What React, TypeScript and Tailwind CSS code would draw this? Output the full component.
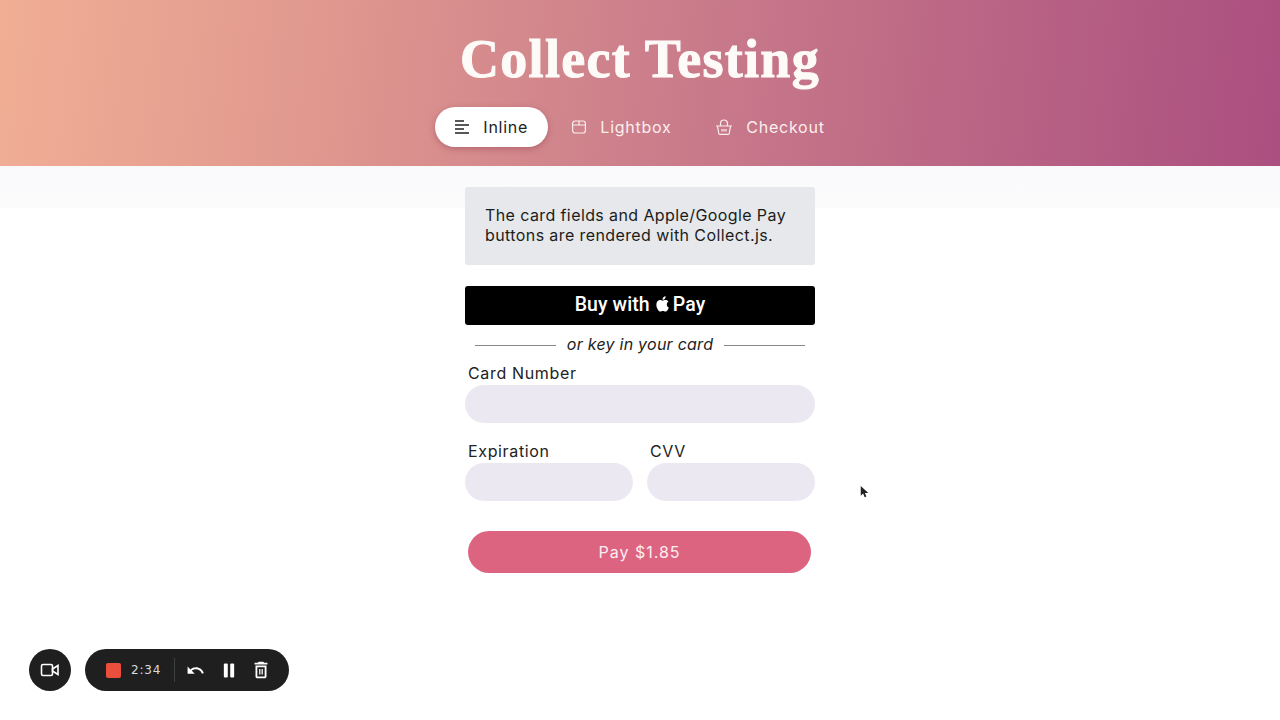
import React from 'react';

const sans = "font-['Inter','Open_Sans',sans-serif]";

const Field = ({ label, className }: { label: string; className?: string }) => (
  <div className={className}>
    <div className="pl-[3px] h-[24px] text-[16px] leading-[24px] tracking-[0.65px] text-[#222]">{label}</div>
    <div className="h-[38px] rounded-[19px] bg-[#ece8f2]" />
  </div>
);

const App = () => (
  <div className={`relative w-[1280px] h-[720px] overflow-hidden bg-white ${sans}`}>
    <header className="h-[166px] pt-[31px] bg-[linear-gradient(96deg,#f1ae95_0%,#e29b8f_22%,#cc7f8b_50%,#bb6685_75%,#ab4f80_100%)]">
      <h1 className="text-center text-[54px] leading-[56px] font-bold tracking-[1.3px] text-[#fdfaf8] [-webkit-text-stroke:1px_#fdfaf8] font-['Liberation_Serif',serif]">
        Collect Testing
      </h1>
      <nav className="mt-[20px] flex justify-center pr-[20px] text-[16px] tracking-[0.75px]">
        <div className="flex items-center w-[113px] h-[40px] rounded-[20px] bg-white pl-[19px] shadow-[0_2px_6px_rgba(120,40,60,0.35)] text-[#222]">
          <svg viewBox="0 0 16 16" className="w-[16px] h-[16px]" fill="none" stroke="currentColor" strokeWidth="1.5">
            <path d="M1 2h9M1 6h14M1 10h9M1 14h14" />
          </svg>
          <span className="ml-[13px]">Inline</span>
        </div>
        <div className="flex items-center w-[150px] h-[40px] pl-[23px] text-[#fbeeee]">
          <svg viewBox="0 0 16 16" className="w-[16px] h-[16px]" fill="none" stroke="currentColor" strokeWidth="1.2">
            <rect x="1.6" y="2" width="12.8" height="12" rx="2.5" />
            <path d="M1.6 6h12.8M8 2v4" />
          </svg>
          <span className="ml-[13px]">Lightbox</span>
        </div>
        <div className="flex items-center h-[40px] pl-[17px] text-[#fbeeee]">
          <svg viewBox="0 0 18 18" className="w-[18px] h-[18px]" fill="none" stroke="currentColor" strokeWidth="1.2">
            <path d="M1 8h16M2.5 8l1.3 7.5a1 1 0 0 0 1 .8h8.4a1 1 0 0 0 1-.8L15.5 8M5.5 8V5.5a3.5 3.5 0 0 1 7 0V8M7 11v2.5M9 11v2.5M11 11v2.5" />
          </svg>
          <span className="ml-[13px]">Checkout</span>
        </div>
      </nav>
    </header>

    <div className="pt-[21px] bg-[linear-gradient(#f9f8fa_0px,#fcfbfc_42px,#ffffff_42px)]">
      <main className="mx-auto w-[350px]">
        <div className="h-[78px] rounded-[3px] bg-[#e6e8eb] px-[20px] pt-[19px] text-[16px] leading-[19.5px] tracking-[0.4px] text-[#1c1c1c]">
          The card fields and Apple/Google Pay buttons are rendered with Collect.js.
        </div>

        <button className="mt-[21px] flex w-full h-[39px] items-center justify-center rounded-[3px] bg-black pb-[2px] text-[19.5px] font-medium tracking-[0.1px] text-white font-['Roboto',sans-serif]">
          Buy with
          <svg viewBox="0 0 24 24" className="ml-[4px] mr-[1px] w-[18px] h-[18px] mb-[2px]" fill="#fff">
            <path d="M17.05 12.54c-.03-2.6 2.12-3.85 2.22-3.91-1.21-1.77-3.09-2.01-3.76-2.04-1.6-.16-3.12.94-3.93.94-.81 0-2.06-.92-3.39-.89-1.74.03-3.35 1.01-4.25 2.57-1.81 3.14-.46 7.79 1.3 10.34.86 1.25 1.89 2.65 3.24 2.6 1.3-.05 1.79-.84 3.36-.84 1.57 0 2.01.84 3.39.81 1.4-.02 2.28-1.27 3.14-2.53.99-1.45 1.4-2.85 1.42-2.93-.03-.01-2.71-1.04-2.74-4.12zM14.47 4.89c.72-.87 1.2-2.08 1.07-3.29-1.03.04-2.29.69-3.03 1.56-.66.77-1.24 2-1.09 3.18 1.15.09 2.33-.59 3.05-1.45z" />
          </svg>
          Pay
        </button>

        <div className="mt-[7px] flex h-[24px] items-center px-[10px] text-[16px] italic tracking-[0.25px] text-[#222]">
          <div className="mt-[2px] h-px flex-1 bg-[#888]" />
          <span className="px-[11px]">or key in your card</span>
          <div className="mt-[2px] h-px flex-1 bg-[#888]" />
        </div>

        <Field label="Card Number" className="mt-[5px]" />

        <div className="mt-[16px] flex gap-[14px]">
          <Field label="Expiration" className="w-[168px]" />
          <Field label="CVV" className="w-[168px]" />
        </div>

        <div className="pl-[3px] pr-[4px] mt-[30px]">
          <button className="w-full h-[42px] rounded-[21px] bg-[#dd6481] text-[16px] tracking-[1px] text-[#fbeef1]">Pay $1.85</button>
        </div>
      </main>
    </div>

    {/* recorder overlay */}
    <div className="absolute left-[29px] top-[649px] flex gap-[14px]">
      <div className="w-[42px] h-[42px] rounded-full bg-[#1f1f20] flex items-center justify-center text-white">
        <svg viewBox="0 0 20 20" className="w-[20px] h-[20px]" fill="none" stroke="currentColor" strokeWidth="1.6">
          <rect x="1.5" y="4.5" width="11" height="11" rx="1.5" />
          <path d="M12.5 9l5.5-3.5v9L12.5 11z" />
        </svg>
      </div>
      <div className="w-[204px] h-[42px] rounded-[21px] bg-[#1f1f20] flex items-center pl-[21px] text-white">
        <div className="w-[15px] h-[15px] rounded-[2px] bg-[#ea4e3d]" />
        <span className="ml-[10px] w-[33px] text-[12px] tracking-[0.8px] font-['DejaVu_Sans',sans-serif] text-[#d8dade]">2:34</span>
        <div className="ml-[10px] w-px h-[24px] bg-[#3c4043]" />
        <svg viewBox="0 0 24 24" className="ml-[11px] w-[19px] h-[19px]" fill="currentColor">
          <path d="M12.5 8c-2.65 0-5.05.99-6.9 2.6L2 7v9h9l-3.62-3.62c1.39-1.16 3.16-1.88 5.12-1.88 3.54 0 6.55 2.31 7.6 5.5l2.37-.78C21.08 11.03 17.15 8 12.5 8z" />
        </svg>
        <svg viewBox="0 0 12 16" className="ml-[18px] w-[12px] h-[15px]" fill="currentColor">
          <rect x="0.5" y="0.5" width="4.2" height="15" rx="1.2" />
          <rect x="7.3" y="0.5" width="4.2" height="15" rx="1.2" />
        </svg>
        <svg viewBox="0 0 24 24" className="ml-[15px] w-[22px] h-[22px]" fill="currentColor">
          <path d="M16 9v10H8V9h8m-1.5-6h-5l-1 1H5v2h14V4h-3.5l-1-1zM18 7H6v12c0 1.1.9 2 2 2h8c1.1 0 2-.9 2-2V7zM10 11h1.4v6H10zM12.6 11H14v6h-1.4z" />
        </svg>
      </div>
    </div>

    {/* mouse cursor */}
    <svg viewBox="0 0 12 16" className="absolute left-[860px] top-[485px] w-[9px] h-[14px]" fill="#222">
      <path d="M1 0v13l3.2-3 2 5 2.3-1-2-4.8H11z" />
    </svg>
  </div>
);

export default App;
